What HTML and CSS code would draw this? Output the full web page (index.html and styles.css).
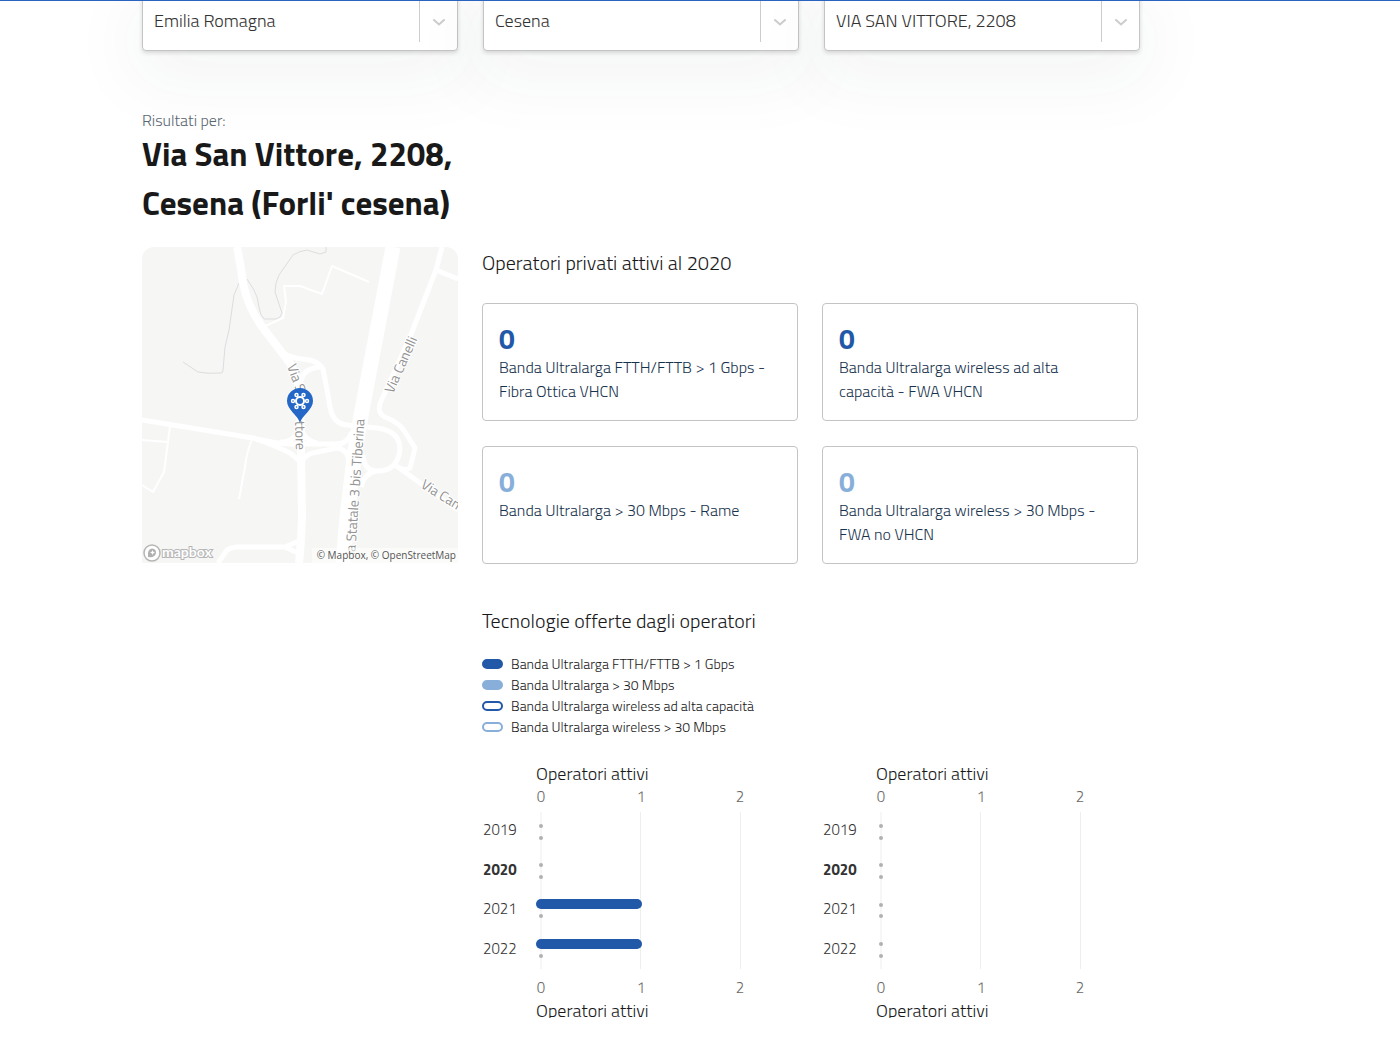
FILE: index.html
```html
<!DOCTYPE html>
<html lang="it">
<head>
<meta charset="utf-8">
<meta name="viewport" content="width=device-width, initial-scale=1">
<title>Banda Ultralarga - Via San Vittore, 2208, Cesena</title>
<link rel="stylesheet" href="styles.css">
</head>
<body>
<header class="topbar"></header>
<main class="page">
  <form class="search">
    <div class="field">
      <label class="sr-only" for="regione">Regione</label>
      <select class="field-select" id="regione"><option>Emilia Romagna</option></select>
      <svg class="field-arrow" viewBox="0 0 20 20" aria-hidden="true"><path d="M5 8L10 12.500L15 8"/></svg>
    </div>
    <div class="field">
      <label class="sr-only" for="comune">Comune</label>
      <select class="field-select" id="comune"><option>Cesena</option></select>
      <svg class="field-arrow" viewBox="0 0 20 20" aria-hidden="true"><path d="M5 8L10 12.500L15 8"/></svg>
    </div>
    <div class="field">
      <label class="sr-only" for="indirizzo">Indirizzo</label>
      <select class="field-select" id="indirizzo"><option>VIA SAN VITTORE, 2208</option></select>
      <svg class="field-arrow" viewBox="0 0 20 20" aria-hidden="true"><path d="M5 8L10 12.500L15 8"/></svg>
    </div>
  </form>

  <div class="results-head">
    <p class="results-label">Risultati per:</p>
    <h1 class="results-title">Via San Vittore, 2208, Cesena (Forli' cesena)</h1>
  </div>

  <div class="results">
    <div class="map">
      <svg class="map-canvas" viewBox="0 0 316 316" role="img" aria-label="Mappa di Via San Vittore">
        <rect width="316" height="316" fill="#f6f6f5"/>
        <g class="stream">
          <path d="M184 0V5L178 7L165 3Q157 4 151 8L137 28Q133 36 133 45L140 66Q139 71 134 72H122Q118 68 117 60Q116 50 112 43L105 32"/>
          <path d="M97 36L92 48L87 83L83 100L81 123Q81 126 79 126Q66 127 56 125L41 115"/>
        </g>
        <g class="road">
          <path class="w3" d="M121 80L141 71L144 55L142 39H158L180 47L190 19L227 35"/>
          <path class="w3" d="M28 179L26 195L22 225L11 245L0 238M0 193L26 195M110 192Q104 208 103 220L97 252"/>
          <path class="w5" d="M0 173L111 191Q128 196 148 206L159 215M111 191Q140 198 155 197H195Q205 197 210 185M138 195Q154 195 158 179Q162 194 175 196M159 216Q164 206 175 205L195 201Q205 202 207 214"/>
          <path class="w5" d="M138 105Q150 111 160 112Q176 113 181 122Q184 136 188 160Q191 177 205 178L235 181Q258 184 258 202Q256 224 235 224Q222 224 221 208M235 224Q222 226 219 240"/>
          <path class="w5" d="M158 140Q158 120 181 120"/>
          <path class="w5" d="M300 0L294 23L268 90L242 148Q232 165 243 170Q258 176 263 185L273 201L268 221Q262 225 253 218L316 263"/>
          <path class="w5" d="M294 23L316 32M76 316L85 303Q90 300 95 300H143L157 294M143 300L156 306"/>
          <path class="w8" d="M95 0Q99 20 101 36Q106 61 121 81L148 116Q158 132 158 158L159 203L160 270Q159 298 157 316"/>
          <path class="w15" d="M251 0L220 163L213 203L205 270L201 316"/>
        </g>
        <g class="map-label">
          <text transform="translate(145 119) rotate(70)">Via San</text>
          <text transform="translate(153 174) rotate(88)">ttore</text>
          <text transform="translate(251 147) rotate(-66)">Via Canelli</text>
          <text transform="translate(213 308) rotate(-86)">ia Statale 3 bis Tiberina</text>
          <text transform="translate(278 240) rotate(32)">Via Canelli</text>
        </g>
        <path fill="#2467c6" d="M158 176C156 168 145 163 145 154A13 13 0 0 1 171 154C171 163 160 168 158 176Z"/>
        <g class="pin-petals">
          <circle cx="151" cy="154" r="1.500"/><circle cx="165" cy="154" r="1.500"/>
          <circle cx="154.500" cy="148" r="1.500"/><circle cx="161.500" cy="148" r="1.500"/>
          <circle cx="154.500" cy="160" r="1.500"/><circle cx="161.500" cy="160" r="1.500"/>
        </g>
        <circle cx="158" cy="154" r="4" fill="#2467c6" stroke="#fff" stroke-width="2"/>
        <rect x="170" y="301" width="146" height="15" fill="#fff" opacity=".5"/>
        <text class="map-credit" x="314" y="312">© Mapbox, © OpenStreetMap</text>
        <g class="map-logo">
          <circle cx="10" cy="306" r="8" fill="#fff" stroke="#b5b5b5" stroke-width="1.500"/>
          <path d="M6 310Q5 302 10 301.500A4.300 4.300 0 0 1 14 306Q13 311 6 310Z" fill="#b0b0b0"/>
          <path d="M10.500 303L11.300 304.800L13 305.500L11.300 306.300L10.500 308L9.700 306.300L8 305.500L9.700 304.800Z" fill="#fff"/>
          <text class="map-brand" x="20" y="310">mapbox</text>
        </g>
      </svg>
    </div>

    <div class="data">
      <h2 class="section-title">Operatori privati attivi al 2020</h2>
      <div class="cards">
        <article class="card"><strong class="card-value">0</strong><p class="card-text">Banda Ultralarga FTTH/FTTB &gt; 1 Gbps - Fibra Ottica VHCN</p></article>
        <article class="card"><strong class="card-value">0</strong><p class="card-text">Banda Ultralarga wireless ad alta capacità - FWA VHCN</p></article>
        <article class="card"><strong class="card-value card-value-light">0</strong><p class="card-text">Banda Ultralarga &gt; 30 Mbps - Rame</p></article>
        <article class="card"><strong class="card-value card-value-light">0</strong><p class="card-text">Banda Ultralarga wireless &gt; 30 Mbps - FWA no VHCN</p></article>
      </div>

      <h2 class="section-title">Tecnologie offerte dagli operatori</h2>
      <ul class="legend">
        <li class="legend-item"><span class="swatch swatch-dark"></span>Banda Ultralarga FTTH/FTTB &gt; 1 Gbps</li>
        <li class="legend-item"><span class="swatch swatch-light"></span>Banda Ultralarga &gt; 30 Mbps</li>
        <li class="legend-item"><span class="swatch swatch-dark-line"></span>Banda Ultralarga wireless ad alta capacità</li>
        <li class="legend-item"><span class="swatch swatch-light-line"></span>Banda Ultralarga wireless &gt; 30 Mbps</li>
      </ul>

      <div class="charts">
        <svg class="chart" viewBox="0 0 316 256" role="img" aria-label="Operatori attivi su rete fissa">
          <text class="chart-title" x="54" y="18">Operatori attivi</text>
          <g class="chart-tick"><text x="59" y="40">0</text><text x="159" y="40">1</text><text x="258" y="40">2</text></g>
          <path class="chart-grid" d="M59 50V207M158.500 50V207M258.500 50V207"/>
          <g class="chart-year"><text x="1" y="73">2019</text><text class="chart-year-current" x="1" y="113">2020</text><text x="1" y="152">2021</text><text x="1" y="192">2022</text></g>
          <g class="chart-dot">
            <circle cx="59" cy="64" r="2"/><circle cx="59" cy="76" r="2"/><circle cx="59" cy="103" r="2"/><circle cx="59" cy="115" r="2"/>
            <circle cx="59" cy="154" r="2"/><circle cx="59" cy="194" r="2"/>
          </g>
          <g class="chart-bar"><rect x="54" y="137" width="106" height="10" rx="5"/><rect x="54" y="177" width="106" height="10" rx="5"/></g>
          <g class="chart-tick"><text x="59" y="231">0</text><text x="159" y="231">1</text><text x="258" y="231">2</text></g>
          <text class="chart-title" x="54" y="255">Operatori attivi</text>
        </svg>
        <svg class="chart" viewBox="0 0 316 256" role="img" aria-label="Operatori attivi su rete wireless">
          <text class="chart-title" x="54" y="18">Operatori attivi</text>
          <g class="chart-tick"><text x="59" y="40">0</text><text x="159" y="40">1</text><text x="258" y="40">2</text></g>
          <path class="chart-grid" d="M59 50V207M158.500 50V207M258.500 50V207"/>
          <g class="chart-year"><text x="1" y="73">2019</text><text class="chart-year-current" x="1" y="113">2020</text><text x="1" y="152">2021</text><text x="1" y="192">2022</text></g>
          <g class="chart-dot">
            <circle cx="59" cy="64" r="2"/><circle cx="59" cy="76" r="2"/><circle cx="59" cy="103" r="2"/><circle cx="59" cy="115" r="2"/>
            <circle cx="59" cy="143" r="2"/><circle cx="59" cy="154" r="2"/><circle cx="59" cy="182" r="2"/><circle cx="59" cy="194" r="2"/>
          </g>
          <g class="chart-tick"><text x="59" y="231">0</text><text x="159" y="231">1</text><text x="258" y="231">2</text></g>
          <text class="chart-title" x="54" y="255">Operatori attivi</text>
        </svg>
      </div>
    </div>
  </div>
</main>
</body>
</html>
```
FILE: styles.css
```css
* { box-sizing: border-box; }

body {
  margin: 0;
  background: #fff;
  color: #19191a;
  font-family: "Titillium Web", Roboto, "Liberation Sans", sans-serif;
  font-weight: 300;
  overflow-x: hidden;
}

h1, h2, p, ul { margin: 0; padding: 0; }

.sr-only {
  position: absolute;
  width: 1px;
  height: 1px;
  overflow: hidden;
  clip-path: inset(50%);
}

.topbar {
  position: sticky;
  top: 0;
  z-index: 2;
  height: 1px;
  background: #2a63c0;
}

.page {
  max-width: 1282px;
  padding: 0 142px 24px;
}

/* Search fields, partly tucked under the top bar */
.search {
  display: grid;
  grid-template-columns: repeat(3, 1fr);
  gap: 25px;
  margin-top: -9px;
}

.field {
  position: relative;
  border-radius: 4px;
  box-shadow: 0 20px 70px 10px rgba(45, 50, 60, .05);
}

.field-select {
  display: block;
  width: 100%;
  height: 59px;
  padding: 0 52px 2px 11px;
  appearance: none;
  border: 1px solid #c4c4c4;
  border-radius: 4px;
  background: #fff linear-gradient(#ccc, #ccc) right 37px top 8px / 1px 41px no-repeat;
  box-shadow: 0 2px 4px rgba(0, 0, 0, .14);
  color: #333;
  font: inherit;
  font-size: 18px;
}

.field-arrow {
  position: absolute;
  top: 20px;
  right: 9px;
  width: 20px;
  height: 20px;
  fill: none;
  stroke: #ccc;
  stroke-width: 2;
  stroke-linecap: round;
  pointer-events: none;
}

/* Results heading */
.results-head,
.results {
  max-width: 996px;
  display: grid;
  grid-template-columns: repeat(3, 1fr);
  column-gap: 24px;
}

.results-head {
  position: relative;
  margin-top: 60px;
}

.results-label,
.results-title { grid-column: 1; }

.results-label {
  color: #5a6772;
  font-size: 16px;
  line-height: 19px;
}

.results-title {
  font-size: 33px;
  font-weight: 700;
  line-height: 49px;
}

.results { margin-top: 19px; }

.map-canvas {
  display: block;
  width: 100%;
  border-radius: 12px 12px 0 0;
}

.stream { fill: none; stroke: #dcdddf; stroke-width: 1; }
.road { fill: none; stroke: #fff; stroke-linejoin: round; }
.w3 { stroke-width: 2px; }
.w5 { stroke-width: 5px; }
.w8 { stroke-width: 8px; }
.w15 { stroke-width: 15px; }

.pin-petals { fill: none; stroke: #fff; stroke-width: 1.5; }

.map-label {
  fill: #929292;
  stroke: #fff;
  stroke-width: 2px;
  paint-order: stroke;
  font-size: 14px;
  font-weight: 400;
}

.map-credit {
  fill: #555;
  font-family: "Open Sans", sans-serif;
  font-size: 10px;
  font-weight: 400;
  text-anchor: end;
}

.map-brand {
  fill: #fff;
  stroke: #b5b5b5;
  stroke-width: 2px;
  paint-order: stroke;
  font-family: Lato, sans-serif;
  font-size: 14px;
  font-weight: 700;
}

/* Data column */
.data { grid-column: span 2; }

.section-title {
  font-size: 20px;
  font-weight: 300;
  line-height: 32px;
}

.cards {
  display: grid;
  grid-template-columns: 1fr 1fr;
  gap: 25px 24px;
  margin: 24px 0 41px;
}

.card {
  min-height: 118px;
  padding: 19px 24px 16px 16px;
  border: 1px solid #c4c4c4;
  border-radius: 4px;
}

.card-value {
  display: block;
  color: #2158a8;
  font-size: 28px;
  font-weight: 700;
  line-height: 32px;
}

.card-value-light { color: #88afd9; }

.card-text {
  color: #17324d;
  font-size: 16px;
  line-height: 24px;
}

.legend {
  margin: 16px 0 25px;
  list-style: none;
}

.legend-item {
  display: flex;
  align-items: center;
  gap: 8px;
  font-size: 14px;
  line-height: 21px;
}

.swatch {
  width: 21px;
  height: 10px;
  border: 2px solid #2158a8;
  border-radius: 5px;
}

.swatch-dark { background: #2158a8; }
.swatch-light { border-color: #88afd9; background: #88afd9; }
.swatch-light-line { border-color: #88afd9; }

.charts {
  display: grid;
  grid-template-columns: 1fr 1fr;
  gap: 24px;
}

.chart {
  display: block;
  width: 100%;
  overflow: hidden;
}

.chart-title { fill: #19191a; font-size: 18px; }
.chart-tick { fill: #666; font-size: 15px; text-anchor: middle; }
.chart-year { fill: #333; font-size: 15px; }
.chart-year-current { font-weight: 700; }
.chart-grid { fill: none; stroke: #eee; }
.chart-dot { fill: #b1b1b3; }
.chart-bar { fill: #2158a8; }
```
